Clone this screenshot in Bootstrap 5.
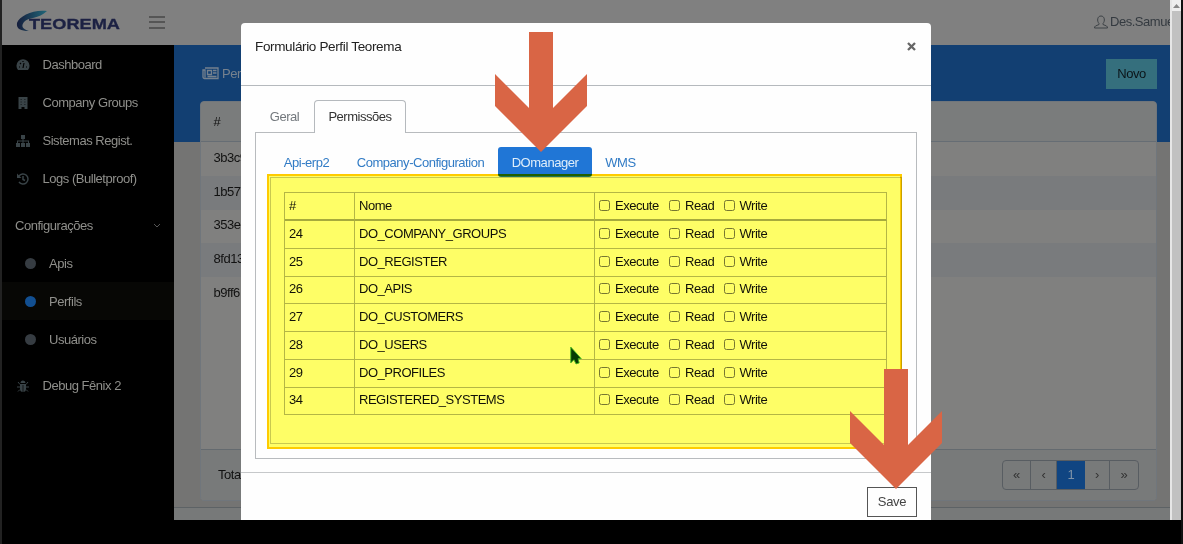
<!DOCTYPE html>
<html lang="pt-BR">
<head>
<meta charset="utf-8">
<title>Teorema - Perfils</title>
<link href="https://cdn.jsdelivr.net/npm/bootstrap@5.3.0/dist/css/bootstrap.min.css" rel="stylesheet">
<style>
html,body{height:544px;overflow:hidden;background:#000}
body{font-family:"Liberation Sans",Arial,sans-serif;font-size:13px;letter-spacing:-.47px;line-height:18px;border-left:2px solid #222;border-right:2px solid #111;color:#111}
.stage{height:520px}
.app{width:1168px;background:#747473}
.topbar{height:45px;background:#808080}
.burger i{display:block;width:16px;height:2px;background:#555;margin-bottom:3.5px}
.side{width:172px;background:#000;color:#8f8f8b}
.side .item{height:38px;padding:1px 0 0 14px}
.side .item svg{width:14px;margin-right:12.5px;fill:#394347}
.side .sub{padding:1px 0 0 23px;height:38px}
.side .sub i{width:11px;height:11px;border-radius:50%;background:#363c42;margin-right:13px}
.side .sub.on{background:#070705}
.side .sub.on i{background:#124f91}
.page{background:linear-gradient(#123f72 0 97px,#747473 97px)}
.pagehead{height:56px;padding:1px 13px 0 28px;color:#75818e}
.novo{background:#356f7d;color:#0b1418;width:51px;height:30px;line-height:30px}
.panel{width:957px;height:400px;margin-left:26px;border:1px solid #70767c;border-radius:4px;background:#80807f}
.panel .head{height:40px;background:#7a7c7c;border-bottom:1px solid #666d74;padding-left:12.5px}
.panel .line{height:33.8px;padding:0 0 2px 12.5px}
.panel .line.alt{background:#797b7d}
.panel .foot{height:51px;background:#787a7a;border-top:1px solid #646a6f;padding:0 17px}
.pagi{width:137px;height:30px;border:1px solid #585d62;border-radius:4px;color:#333}
.pagi span{text-align:center;line-height:28px;border-right:1px solid #585d62}
.bottomline{height:13px;background:#777979;border-top:1px solid #5d6265}
.scroller{width:11px;background:#c1c1c1;border-left:2px solid #e6e6e6}
.scroller div{height:11px;background:#eee}
.dlg{left:239px;top:23px;width:690px;height:497px;background:#fefefe;border-radius:4px 4px 0 0;color:#222}
.dlg-head{height:63px;border-bottom:1px solid #b5b9bd;padding:15px 14px}
.dlg-title{font-size:13.5px;letter-spacing:-.35px}
.dlg-body{padding:14px;height:387px;border-bottom:1px solid #c6c8ca}
.tabs{height:33px;margin-bottom:-1px;position:relative}
.tabs .t{width:59px;line-height:33px;text-align:center;color:#73787d}
.tabs .t.on{width:92px;color:#333;background:#fefefe;border:1px solid #b5b9bd;border-bottom:0;border-radius:4px 4px 0 0;line-height:31px}
.pane{height:327px;border:1px solid #b8bbbe;padding:14px 14px 0}
.pills{height:30px}
.pills a{color:#317bc5;text-decoration:none;line-height:31px;text-align:center}
.pills a.on{background:#2076d6;color:#dfeefa;border-radius:3px}
.inner{height:267px;border:1px solid #c8c9c4;padding:14px 14px 0 13px}
table.perm{width:603px;table-layout:fixed;border-collapse:separate;border-spacing:0;border-top:1px solid #b4b6ad;border-left:1px solid #b4b6ad;color:#111}
.perm td,.perm th{height:27.75px;padding:0 0 1px 4px;font-weight:400;border-right:1px solid #b4b6ad;border-bottom:1px solid #b4b6ad;line-height:18px}
.perm th{height:28px;border-bottom:2px solid #a6aa98;padding-bottom:0}
.perm i{display:inline-block;width:11px;height:11px;border:1px solid #777;border-radius:2.5px;vertical-align:-1px;margin-right:5px}
.perm span{display:inline-block;white-space:nowrap}
.save{border:1px solid #555;width:50px;height:30px;line-height:28px;margin:14px 14px 0 0;color:#444;letter-spacing:-.3px}
.mark-area{left:265px;top:174px;width:635px;height:275px;background:#ffff66;border:1px solid #fc0;border-width:2px;mix-blend-mode:multiply}
.arrow{width:92px;height:120px;fill:#d96545}
</style>
</head>
<body>
<div class="stage d-flex position-relative">
 <div class="app d-flex flex-column overflow-hidden">
  <header class="topbar d-flex align-items-center flex-shrink-0">
   <svg width="106" height="28" viewBox="0 0 106 28" style="margin:-2px 0 0 14px"><defs><linearGradient id="g"><stop stop-color="#151d3c"/><stop offset="1" stop-color="#206779"/></linearGradient></defs><path d="M31 3C18 1 3 8 1 15c-1 6 4 8 12 8C6 21 5 18 8 14 12 9 23 11 31 3Z" fill="url(#g)"/><text x="13" y="20.500" textLength="91" lengthAdjust="spacingAndGlyphs" font-family="Liberation Sans" font-weight="700" font-size="14.5" letter-spacing="0" fill="#1c2143" stroke="#1c2143" stroke-width=".3">TEOREMA</text></svg>
   <div class="burger" style="margin:-1px 0 0 27px"><i></i><i></i><i class="mb-0"></i></div>
   <div class="ms-auto d-flex align-items-center text-nowrap" style="width:76px;color:#343a40;margin-top:-1px"><svg width="14" height="14" viewBox="0 0 14 14" fill="none" stroke="#3d4246" stroke-width="1" class="flex-shrink-0"><path d="M5 8.500C2.700 6 3.300 1 7 1s4.300 5 2 7.500v1l3.500 1.500c.7.4 1 1 1 2H.5c0-1 .3-1.600 1-2L5 9.500Z"/></svg><span style="margin-left:2px">Des.Samue</span></div>
  </header>
  <div class="d-flex flex-grow-1">
   <nav class="side flex-shrink-0">
    <div class="item d-flex align-items-center"><svg viewBox="0 0 14 14"><path d="M2 12A6.500 6.500 0 1 1 12 12Z"/><path d="M7 10 8 5M3 9h1M4 5l1 1M7 3v1M10 9h1" stroke="#000" stroke-width="1.200"/></svg>Dashboard</div>
    <div class="item d-flex align-items-center"><svg viewBox="0 0 14 14"><path d="M2.500 1h9v12H8.500v-2h-3v2h-3Z"/><path d="M4.500 3.500h1.300M8.200 3.500h1.300M4.500 6h1.300M8.200 6h1.300M4.500 8.500h1.300M8.200 8.500h1.300" stroke="#1c2225"/></svg>Company Groups</div>
    <div class="item d-flex align-items-center"><svg viewBox="0 0 14 14"><path d="M5 1h4v4H7.500v1.500H13V9h1v4h-4V9h2V7.500H7.500V9H9v4H5V9h1.500V7.500H2V9h2v4H0V9h1V6.500h5.500V5H5Z"/></svg>Sistemas Regist.</div>
    <div class="item d-flex align-items-center"><svg viewBox="0 0 14 14"><path d="M3 4a5 5 0 1 1 0 6M7 4v3.500l2 1" fill="none" stroke="#394347" stroke-width="1.500"/><path d="M1 1.500v4.500h4.500Z"/></svg>Logs (Bulletproof)</div>
    <div class="d-flex align-items-center justify-content-between" style="height:56px;padding:2px 13px 0 13px">Configurações<svg width="8" height="6" fill="none" stroke="#555"><path d="m1 1 3 3 3-3"/></svg></div>
    <div class="sub d-flex align-items-center" style="margin-top:-9px"><i></i>Apis</div>
    <div class="sub d-flex align-items-center on"><i></i>Perfils</div>
    <div class="sub d-flex align-items-center"><i></i>Usuários</div>
    <div class="item d-flex align-items-center" style="margin-top:8px"><svg viewBox="0 0 14 14"><path d="M4.500 4a2.500 2.500 0 0 1 5 0ZM4 5h6v5a3 3 0 0 1-6 0Z"/><path d="M2 3l2 2.500M12 3l-2 2.500M1 8h3M10 8h3M2 12.500l2-2M12 12.500l-2-2" stroke="#394347"/><path d="M7 6v7" stroke="#000" stroke-width=".7"/></svg>Debug Fênix 2</div>
   </nav>
   <main class="page flex-grow-1 d-flex flex-column">
    <div class="pagehead d-flex align-items-center justify-content-between"><div class="d-flex align-items-center"><svg width="17" height="13" viewBox="0 0 17 13" fill="none" stroke="#75818e" stroke-width="1.300" style="margin-right:3px"><path d="M3 1h13v10.500H2.500A1.500 1.500 0 0 1 1 10V3h2v7.500M5.500 3.500h4v4h-4ZM11 3.500h3.500M11 6h3.500M5.500 9.500h9"/></svg>Perfils</div><div class="novo text-center">Novo</div></div>
    <section class="panel d-flex flex-column overflow-hidden">
     <div class="head d-flex align-items-center flex-shrink-0">#</div>
     <div class="line d-flex align-items-center">3b3c9</div>
     <div class="line alt d-flex align-items-center">1b57</div>
     <div class="line d-flex align-items-center">353e</div>
     <div class="line alt d-flex align-items-center">8fd13</div>
     <div class="line d-flex align-items-center">b9ff6</div>
     <div class="foot d-flex align-items-center justify-content-between mt-auto"><span>Total</span><div class="pagi d-flex"><span style="width:28px">«</span><span style="width:26px">‹</span><span style="width:28px;background:#104582;color:#7f93a8;border:0">1</span><span style="width:25px">›</span><span class="flex-grow-1 border-0">»</span></div></div>
    </section>
    <div class="bottomline mt-auto"></div>
   </main>
  </div>
 </div>
 <div class="scroller"><div class="d-flex justify-content-center align-items-center"><svg width="7" height="4" fill="#888"><path d="M0 4 3.500 0 7 4Z"/></svg></div></div>

 <div class="dlg position-absolute">
  <div class="dlg-head d-flex justify-content-between"><span class="dlg-title">Formulário Perfil Teorema</span><svg width="9" height="9" viewBox="0 0 9 9" stroke="#666" stroke-width="2.300" style="margin:4px 1px"><path d="m1 1 7 7M8 1 1 8"/></svg></div>
  <div class="dlg-body">
   <div class="tabs d-flex"><div class="t">Geral</div><div class="t on">Permissões</div></div>
   <div class="pane">
    <div class="pills d-flex"><a href="#" style="width:73px">Api-erp2</a><a href="#" style="width:155px">Company-Configuration</a><a href="#" class="on" style="width:94px">DOmanager</a><a href="#" style="width:57px">WMS</a></div>
    <div class="inner">
     <table class="perm"><colgroup><col style="width:70px"><col style="width:240px"><col></colgroup><thead><tr><th>#</th><th>Nome</th><th class="opts"></th></tr></thead><tbody></tbody></table>
    </div>
   </div>
  </div>
  <div class="save text-center ms-auto">Save</div>
 </div>

 <svg class="position-absolute" style="left:567px;top:346px" width="13" height="19" viewBox="0 0 12 18"><path d="M1.500 1v15l3-3 2 4 3-1-1-4h3Z" fill="#063b08" stroke="#42bd42" stroke-width=".8"/></svg>
 <div class="mark-area position-absolute"></div>
 <svg class="arrow position-absolute" style="left:493px;top:32px"><path d="M34 0h24v76L92 42v32L46 120 0 74V42l34 34Z"/></svg>
 <svg class="arrow position-absolute" style="left:848px;top:369px"><path d="M34 0h24v76L92 42v32L46 120 0 74V42l34 34Z"/></svg>
</div>
<script src="https://cdn.jsdelivr.net/npm/bootstrap@5.3.0/dist/js/bootstrap.bundle.min.js"></script>
<script>
const opts='<span style="width:70px"><i></i>Execute</span><span style="width:54.5px"><i></i>Read</span><span><i></i>Write</span>';
document.querySelector('.opts').innerHTML=opts;
document.querySelector('.perm tbody').innerHTML=[[24,'DO_COMPANY_GROUPS'],[25,'DO_REGISTER'],[26,'DO_APIS'],[27,'DO_CUSTOMERS'],[28,'DO_USERS'],[29,'DO_PROFILES'],[34,'REGISTERED_SYSTEMS']].map(r=>`<tr><td>${r[0]}</td><td>${r[1]}</td><td>${opts}</td></tr>`).join('');
</script>
</body>
</html>
